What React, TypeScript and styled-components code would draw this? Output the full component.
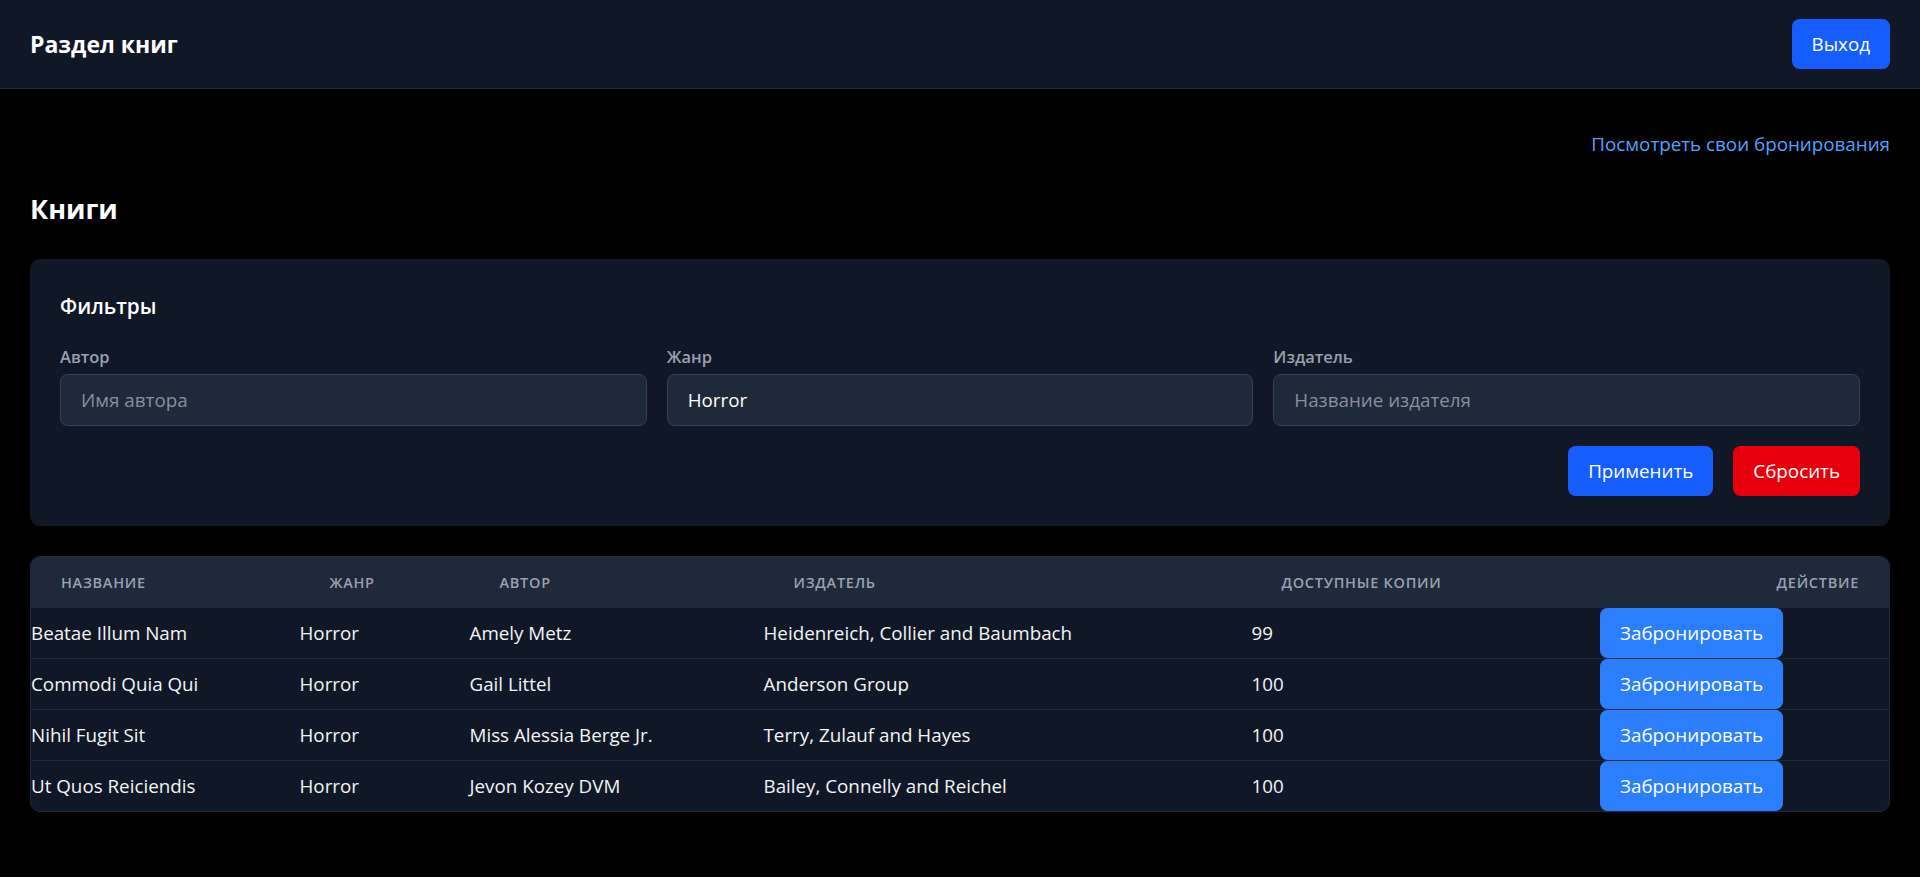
import React from "react";
import styled, { createGlobalStyle } from "styled-components";

const GlobalStyle = createGlobalStyle`
  html, body {
    margin: 0;
    padding: 0;
    background: #ffffff;
  }
  * { box-sizing: border-box; }
  body {
    font-family: "Open Sans", "Noto Sans", sans-serif;
  }
`;

const Page = styled.div`
  min-height: 877px;
  background: #000000;
  color: #f3f4f6;
  font-family: "Open Sans", "Noto Sans", sans-serif;
`;

const TopBar = styled.header`
  height: 89px;
  padding: 0 30px;
  background: #101828;
  border-bottom: 1px solid #1e2939;
  display: flex;
  align-items: center;
  justify-content: space-between;
`;

const BrandTitle = styled.h1`
  margin: 0;
  font-size: 23px;
  line-height: 35px;
  font-weight: 700;
  color: #ffffff;
`;

const Button = styled.button<{ $tone: "primary" | "danger" | "accent" }>`
  height: 50px;
  padding: 0 20px;
  border: none;
  border-radius: 7.5px;
  font-family: inherit;
  font-size: 18.8px;
  line-height: 30px;
  color: #ffffff;
  cursor: pointer;
  white-space: nowrap;
  background: ${(p) =>
    p.$tone === "danger" ? "#e7000b" : p.$tone === "accent" ? "#2b7fff" : "#155dfc"};
`;

const Main = styled.main`
  padding: 40px 30px 30px;
`;

const LinkRow = styled.div`
  display: flex;
  justify-content: flex-end;
  margin-bottom: 30px;
`;

const TextLink = styled.a`
  font-size: 18.8px;
  line-height: 30px;
  color: #51a2ff;
  text-decoration: none;
`;

const PageTitle = styled.h2`
  margin: 0 0 30px;
  font-size: 27px;
  line-height: 40px;
  font-weight: 700;
  color: #ffffff;
`;

const FilterCard = styled.section`
  background: #101828;
  border-radius: 10px;
  padding: 30px;
  margin-bottom: 30px;
`;

const CardTitle = styled.h3`
  margin: 0 0 20px;
  font-size: 20.7px;
  line-height: 35px;
  font-weight: 600;
  color: #ffffff;
`;

const FieldGrid = styled.div`
  display: grid;
  grid-template-columns: repeat(3, 1fr);
  gap: 20px;
`;

const Field = styled.label`
  display: flex;
  flex-direction: column;
  gap: 5px;
`;

const FieldLabel = styled.span`
  font-size: 16.5px;
  line-height: 25px;
  font-weight: 600;
  color: #99a1af;
`;

const TextInput = styled.input`
  height: 52px;
  padding: 0 20px;
  background: #1e2939;
  border: 1px solid #364153;
  border-radius: 7.5px;
  font-family: inherit;
  font-size: 18.8px;
  color: #ffffff;
  outline: none;
  &::placeholder {
    color: #8a909a;
  }
`;

const ActionRow = styled.div`
  display: flex;
  justify-content: flex-end;
  gap: 20px;
  margin-top: 20px;
`;

const TableWrap = styled.div`
  border: 1px solid #1e2939;
  border-radius: 10px;
  overflow: hidden;
  background: #101828;
`;

const Table = styled.table`
  width: 100%;
  border-collapse: collapse;
  table-layout: fixed;
`;

const HeadCell = styled.th<{ $align?: "left" | "right" }>`
  padding: 15.5px 30px;
  background: #1e2939;
  text-align: ${(p) => p.$align ?? "left"};
  font-size: 14.5px;
  line-height: 20px;
  font-weight: 600;
  letter-spacing: 0.05em;
  text-transform: uppercase;
  color: #99a1af;
  white-space: nowrap;
`;

const BodyRow = styled.tr`
  & + & td {
    border-top: 1px solid #1e2939;
  }
`;

const Cell = styled.td`
  padding: 0;
  height: 50px;
  vertical-align: middle;
  font-size: 18.8px;
  line-height: 30px;
  color: #f3f4f6;
  white-space: nowrap;
`;

const books = [
  { title: "Beatae Illum Nam", genre: "Horror", author: "Amely Metz", publisher: "Heidenreich, Collier and Baumbach", copies: 99 },
  { title: "Commodi Quia Qui", genre: "Horror", author: "Gail Littel", publisher: "Anderson Group", copies: 100 },
  { title: "Nihil Fugit Sit", genre: "Horror", author: "Miss Alessia Berge Jr.", publisher: "Terry, Zulauf and Hayes", copies: 100 },
  { title: "Ut Quos Reiciendis", genre: "Horror", author: "Jevon Kozey DVM", publisher: "Bailey, Connelly and Reichel", copies: 100 },
];

const colWidths = [268.5, 170, 294, 488, 348.5, 289];

export default function App() {
  return (
    <Page>
      <GlobalStyle />
      <TopBar>
        <BrandTitle>Раздел книг</BrandTitle>
        <Button $tone="primary">Выход</Button>
      </TopBar>
      <Main>
        <LinkRow>
          <TextLink href="#">Посмотреть свои бронирования</TextLink>
        </LinkRow>
        <PageTitle>Книги</PageTitle>
        <FilterCard>
          <CardTitle>Фильтры</CardTitle>
          <FieldGrid>
            <Field>
              <FieldLabel>Автор</FieldLabel>
              <TextInput placeholder="Имя автора" />
            </Field>
            <Field>
              <FieldLabel>Жанр</FieldLabel>
              <TextInput defaultValue="Horror" />
            </Field>
            <Field>
              <FieldLabel>Издатель</FieldLabel>
              <TextInput placeholder="Название издателя" />
            </Field>
          </FieldGrid>
          <ActionRow>
            <Button $tone="primary">Применить</Button>
            <Button $tone="danger">Сбросить</Button>
          </ActionRow>
        </FilterCard>
        <TableWrap>
          <Table>
            <colgroup>
              {colWidths.map((w, i) => (
                <col key={i} style={{ width: `${w}px` }} />
              ))}
            </colgroup>
            <thead>
              <tr>
                <HeadCell>Название</HeadCell>
                <HeadCell>Жанр</HeadCell>
                <HeadCell>Автор</HeadCell>
                <HeadCell>Издатель</HeadCell>
                <HeadCell>Доступные копии</HeadCell>
                <HeadCell $align="right">Действие</HeadCell>
              </tr>
            </thead>
            <tbody>
              {books.map((b) => (
                <BodyRow key={b.title}>
                  <Cell>{b.title}</Cell>
                  <Cell>{b.genre}</Cell>
                  <Cell>{b.author}</Cell>
                  <Cell>{b.publisher}</Cell>
                  <Cell>{b.copies}</Cell>
                  <Cell>
                    <Button $tone="accent">Забронировать</Button>
                  </Cell>
                </BodyRow>
              ))}
            </tbody>
          </Table>
        </TableWrap>
      </Main>
    </Page>
  );
}
